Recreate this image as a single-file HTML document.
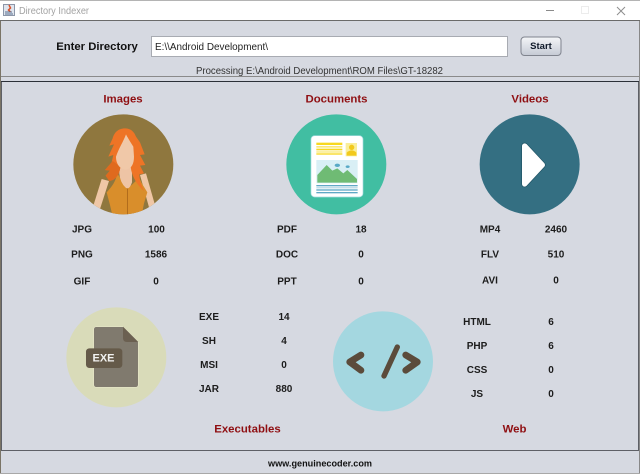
<!DOCTYPE html>
<html><head><meta charset="utf-8"><style>
html,body{margin:0;padding:0;width:640px;height:474px;overflow:hidden;background:#d6d9e1}
svg{display:block}
text{font-family:"Liberation Sans",Arial,sans-serif}
.l{font-size:10px;font-weight:bold;fill:#1c1c1c;text-anchor:middle;dominant-baseline:central}
.t{font-size:11.4px;font-weight:bold;fill:#8f0f12;text-anchor:middle;dominant-baseline:central}
</style></head><body>
<svg width="640" height="474" viewBox="0 0 640 474" xmlns="http://www.w3.org/2000/svg">
<defs><clipPath id="c1"><circle cx="190" cy="178" r="150"/></clipPath>
<linearGradient id="b" x1="0" y1="0" x2="0" y2="1"><stop offset="0" stop-color="#f4f5f8"/><stop offset="1" stop-color="#c5cad4"/></linearGradient></defs>
<rect width="640" height="474" fill="#d6d9e1"/>
<!-- title bar -->
<rect width="640" height="20" fill="#fff"/>
<rect width="640" height="1" fill="#b4b4b4"/>
<rect y="20" width="640" height="1" fill="#6a6a6a"/>
<rect x="3.5" y="4.5" width="11" height="11" fill="#dfe5ee" stroke="#8c96a8"/>
<path d="M9 5l1.500 3-2 2 2 2" stroke="#d8502a" stroke-width="1.500" fill="none"/>
<path d="M5 12h7M5 14h8" stroke="#5a7090" stroke-width="1"/>
<text x="19" y="14" font-size="10.500" fill="#a2a2a2" textLength="70" lengthAdjust="spacingAndGlyphs">Directory Indexer</text>
<path d="M546 10.500h8" stroke="#8a8a8a"/>
<rect x="581.500" y="6.500" width="7" height="7" fill="none" stroke="#ececec"/>
<path d="M617 7l8 8M625 7l-8 8" stroke="#8e8e8e" fill="none"/>
<!-- top panel -->
<rect x="0" y="21" width="1" height="453" fill="#7a7466"/>
<rect x="639" y="21" width="1" height="453" fill="#888"/>
<rect x="1" y="76" width="638" height="1" fill="#8a8a8a"/>
<text x="97" y="47" font-size="11.300" font-weight="bold" fill="#101010" text-anchor="middle" dominant-baseline="central">Enter Directory</text>
<rect x="151.500" y="36.500" width="356" height="20" fill="#fff" stroke="#a8abb2"/>
<text x="155" y="50" font-size="10" fill="#222" textLength="113" lengthAdjust="spacingAndGlyphs">E:\\Android Development\</text>
<rect x="521" y="37" width="40" height="18.500" rx="3.500" fill="url(#b)" stroke="#80848e"/>
<text x="541" y="46.500" font-size="9.500" font-weight="bold" fill="#101a2a" text-anchor="middle" dominant-baseline="central">Start</text>
<text x="196" y="74" font-size="10" fill="#333" textLength="247" lengthAdjust="spacingAndGlyphs">Processing E:\Android Development\ROM Files\GT-18282</text>
<!-- main panel -->
<rect x="1.500" y="81.500" width="637" height="369" fill="#d6d9e1" stroke="#5e6066"/>
<rect x="1" y="81" width="638" height="1" fill="#2c3038"/>
<rect x="0" y="473" width="640" height="1" fill="#a8a8a8"/>
<text class="t" x="123" y="99.500">Images</text>
<text class="t" x="336.500" y="99.500">Documents</text>
<text class="t" x="530" y="99.500">Videos</text>
<text class="t" x="247.500" y="429.500">Executables</text>
<text class="t" x="514.500" y="429.500">Web</text>
<!-- woman -->
<g transform="translate(60,105) scale(.3333)">
<circle cx="190" cy="178" r="150" fill="#8f773e"/>
<g clip-path="url(#c1)">
<path d="M125 222L147 228 120 312 100 302Z" fill="#efc7a6"/>
<path d="M240 210L258 205 285 300 268 310Z" fill="#efc7a6"/>
<path d="M172 205C166 235 150 250 140 262L150 300 157 330H245L252 295 262 262C252 245 244 235 238 218L215 240 200 250Z" fill="#d98e2b"/>
<rect x="201" y="250" width="3" height="78" fill="#b26c1c"/>
<path d="M178 180H216V232Q208 256 197 248 180 232 178 205Z" fill="#eec4a5"/>
<path d="M196 70C172 70 162 85 158 100L148 122 162 118 145 155 160 150 155 172 135 195 150 197 137 212 148 228C168 226 180 205 181 185L212 185C214 205 225 235 252 258L240 228 238 208 252 205 240 182 256 180 240 150 254 148 240 112 228 95C222 78 210 70 196 70Z" fill="#ee7426"/>
<path d="M158 168L135 195 150 197 137 212 148 228C168 226 180 205 181 185Z" fill="#df6a1e"/>
<path d="M198 88C190 110 176 130 168 155 168 175 178 192 197 194 214 192 222 178 222 155L220 125C212 112 204 100 198 88Z" fill="#f0c8a8"/>
</g></g>
<!-- document -->
<g transform="translate(275,105) scale(.3333)">
<circle cx="184" cy="178" r="150" fill="#41bea2"/>
<rect x="108" y="92" width="156" height="184" rx="11" fill="#fff" stroke="#a6dbe0" stroke-width="2"/>
<rect x="124" y="113" width="78" height="7" fill="#f7d820"/>
<rect x="124" y="123" width="78" height="5" fill="#f9e878"/>
<rect x="124" y="131" width="78" height="5" fill="#f7d820"/>
<rect x="124" y="139" width="78" height="4" fill="#f9e878"/>
<rect x="124" y="145" width="78" height="4" fill="#f7d820"/>
<rect x="212" y="114" width="34" height="40" fill="#f9ee9a"/>
<circle cx="230" cy="127" r="8" fill="#f2c91c"/>
<path d="M215 152V143Q222 136 230 136 238 136 244 143V152Z" fill="#f2c91c"/>
<rect x="124" y="165" width="124" height="70" fill="#d9eff5"/>
<path d="M127 233V210L155 180 172 197 187 190 205 205 217 195 246 222V233Z" fill="#6fbb74"/>
<ellipse cx="187" cy="181" rx="8" ry="5" fill="#59a9c6"/>
<ellipse cx="218" cy="185" rx="6" ry="4" fill="#59a9c6"/>
<rect x="124" y="240" width="124" height="4" fill="#5fa8c6"/>
<rect x="124" y="247" width="124" height="3" fill="#a5cfe0"/>
<rect x="124" y="253" width="124" height="4" fill="#5fa8c6"/>
<rect x="124" y="261" width="124" height="4" fill="#5fa8c6"/>
</g>
<!-- play -->
<g transform="translate(470,105) scale(.3333)">
<circle cx="179" cy="178" r="150" fill="#346f82"/>
<path d="M164 123L217 180 164 237Z" fill="#1f5364" stroke="#1f5364" stroke-width="20" stroke-linejoin="round"/>
<path d="M164 123L217 180 164 237Z" fill="#fff" stroke="#fff" stroke-width="16" stroke-linejoin="round"/>
</g>
<!-- exe -->
<g transform="translate(55,300) scale(.3333)">
<circle cx="184" cy="172" r="150" fill="#d9dbb9"/>
<path d="M124 80H204L250 126V254Q250 262 242 262H124Q116 262 116 254V88Q116 80 124 80Z" fill="#807a6e" stroke="#e6e6c8" stroke-width="2"/>
<path d="M204 80L250 126H216Q204 126 204 114Z" fill="#6b6051"/>
<rect x="93" y="145" width="109" height="59" rx="10" fill="#655a49"/>
</g>
<text x="103.500" y="358.500" font-size="11" font-weight="bold" fill="#f2f2f0" text-anchor="middle" dominant-baseline="central">EXE</text>
<!-- code -->
<g transform="translate(325,305) scale(.3333)" fill="none" stroke="#5b4b3b" stroke-linecap="round" stroke-linejoin="round">
<circle cx="174" cy="169" r="150" fill="#a4d7e0" stroke="none"/>
<path d="M108 150L74 171 108 196" stroke-width="20"/>
<path d="M217 126L177 213" stroke-width="16"/>
<path d="M242 150L277 171 242 196" stroke-width="20"/>
</g>
<!-- labels -->
<text class="l" x="82" y="230">JPG</text><text class="l" x="156.500" y="230">100</text>
<text class="l" x="82" y="255">PNG</text><text class="l" x="156" y="255">1586</text>
<text class="l" x="82" y="282">GIF</text><text class="l" x="156" y="282">0</text>
<text class="l" x="287" y="230">PDF</text><text class="l" x="361" y="230">18</text>
<text class="l" x="287" y="255">DOC</text><text class="l" x="361" y="255">0</text>
<text class="l" x="287" y="282">PPT</text><text class="l" x="361" y="282">0</text>
<text class="l" x="490" y="230">MP4</text><text class="l" x="556" y="230">2460</text>
<text class="l" x="490" y="255">FLV</text><text class="l" x="556" y="255">510</text>
<text class="l" x="490" y="281">AVI</text><text class="l" x="556" y="281">0</text>
<text class="l" x="209" y="317.500">EXE</text><text class="l" x="284" y="317.500">14</text>
<text class="l" x="209" y="341.500">SH</text><text class="l" x="284" y="341.500">4</text>
<text class="l" x="209" y="365.500">MSI</text><text class="l" x="284" y="365.500">0</text>
<text class="l" x="209" y="389.500">JAR</text><text class="l" x="284" y="389.500">880</text>
<text class="l" x="477" y="322.500">HTML</text><text class="l" x="551" y="322.500">6</text>
<text class="l" x="477" y="346.500">PHP</text><text class="l" x="551" y="346.500">6</text>
<text class="l" x="477" y="370.500">CSS</text><text class="l" x="551" y="370.500">0</text>
<text class="l" x="477" y="394.500">JS</text><text class="l" x="551" y="394.500">0</text>
<text x="320" y="464" font-size="9.500" font-weight="bold" fill="#111" text-anchor="middle" dominant-baseline="central" textLength="104" lengthAdjust="spacingAndGlyphs">www.genuinecoder.com</text>
</svg>
</body></html>
